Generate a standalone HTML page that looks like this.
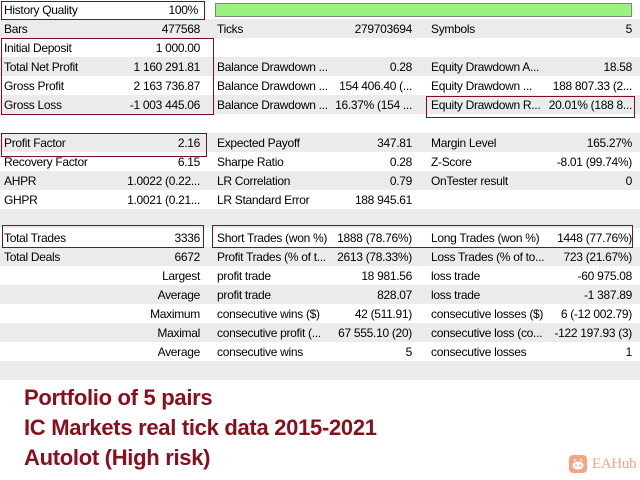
<!DOCTYPE html>
<html><head><meta charset="utf-8"><style>
*{margin:0;padding:0;box-sizing:border-box}
body{width:640px;height:480px;background:#fff;position:relative;overflow:hidden;font-family:"Liberation Sans",sans-serif;font-size:12px;color:#000;letter-spacing:-0.3px}
.r{position:absolute;left:0;width:640px;height:19px}
.g{background:#ebebeb}
.c{position:absolute;top:3px;white-space:nowrap;line-height:15px}
.l1{left:4px}.v1{right:440px}.l2{left:217px}.v2{right:228px}.l3{left:431px}.v3{right:8px}
.b{position:absolute;border:1px solid #7a1020}
.t{position:absolute;left:24px;font-weight:bold;font-size:22px;color:#8a0f1c;letter-spacing:-0.3px;white-space:nowrap}
</style></head><body>
<div class="r" style="top:0"><span class="c l1">History Quality</span><span class="c v1" style="right:442px">100%</span></div>
<div style="position:absolute;left:215px;top:3px;width:417px;height:14px;background:#98f47e;border:1px solid #7a8a7a"></div>
<div class="r g" style="top:19px"><span class="c l1">Bars</span><span class="c v1">477568</span><span class="c l2">Ticks</span><span class="c v2">279703694</span><span class="c l3">Symbols</span><span class="c v3">5</span></div>
<div class="r" style="top:38px"><span class="c l1">Initial Deposit</span><span class="c v1">1 000.00</span></div>
<div class="r g" style="top:57px"><span class="c l1">Total Net Profit</span><span class="c v1">1 160 291.81</span><span class="c l2">Balance Drawdown ...</span><span class="c v2">0.28</span><span class="c l3">Equity Drawdown A...</span><span class="c v3">18.58</span></div>
<div class="r" style="top:76px"><span class="c l1">Gross Profit</span><span class="c v1">2 163 736.87</span><span class="c l2">Balance Drawdown ...</span><span class="c v2">154 406.40 (...</span><span class="c l3">Equity Drawdown ...</span><span class="c v3">188 807.33 (2...</span></div>
<div class="r g" style="top:95px"><span class="c l1">Gross Loss</span><span class="c v1">-1 003 445.06</span><span class="c l2">Balance Drawdown ...</span><span class="c v2">16.37% (154 ...</span><span class="c l3">Equity Drawdown R...</span><span class="c v3">20.01% (188 8...</span></div>
<div class="r g" style="top:133px"><span class="c l1">Profit Factor</span><span class="c v1">2.16</span><span class="c l2">Expected Payoff</span><span class="c v2">347.81</span><span class="c l3">Margin Level</span><span class="c v3">165.27%</span></div>
<div class="r" style="top:152px"><span class="c l1">Recovery Factor</span><span class="c v1">6.15</span><span class="c l2">Sharpe Ratio</span><span class="c v2">0.28</span><span class="c l3">Z-Score</span><span class="c v3">-8.01 (99.74%)</span></div>
<div class="r g" style="top:171px"><span class="c l1">AHPR</span><span class="c v1">1.0022 (0.22...</span><span class="c l2">LR Correlation</span><span class="c v2">0.79</span><span class="c l3">OnTester result</span><span class="c v3">0</span></div>
<div class="r" style="top:190px"><span class="c l1">GHPR</span><span class="c v1">1.0021 (0.21...</span><span class="c l2">LR Standard Error</span><span class="c v2">188 945.61</span></div>
<div class="r g" style="top:209px"></div>
<div class="r" style="top:228px"><span class="c l1">Total Trades</span><span class="c v1">3336</span><span class="c l2">Short Trades (won %)</span><span class="c v2">1888 (78.76%)</span><span class="c l3">Long Trades (won %)</span><span class="c v3">1448 (77.76%)</span></div>
<div class="r g" style="top:247px"><span class="c l1">Total Deals</span><span class="c v1">6672</span><span class="c l2">Profit Trades (% of t...</span><span class="c v2">2613 (78.33%)</span><span class="c l3">Loss Trades (% of to...</span><span class="c v3">723 (21.67%)</span></div>
<div class="r" style="top:266px"><span class="c v1">Largest</span><span class="c l2">profit trade</span><span class="c v2">18 981.56</span><span class="c l3">loss trade</span><span class="c v3">-60 975.08</span></div>
<div class="r g" style="top:285px"><span class="c v1">Average</span><span class="c l2">profit trade</span><span class="c v2">828.07</span><span class="c l3">loss trade</span><span class="c v3">-1 387.89</span></div>
<div class="r" style="top:304px"><span class="c v1">Maximum</span><span class="c l2">consecutive wins ($)</span><span class="c v2">42 (511.91)</span><span class="c l3">consecutive losses ($)</span><span class="c v3">6 (-12 002.79)</span></div>
<div class="r g" style="top:323px"><span class="c v1">Maximal</span><span class="c l2">consecutive profit (...</span><span class="c v2">67 555.10 (20)</span><span class="c l3">consecutive loss (co...</span><span class="c v3">-122 197.93 (3)</span></div>
<div class="r" style="top:342px"><span class="c v1">Average</span><span class="c l2">consecutive wins</span><span class="c v2">5</span><span class="c l3">consecutive losses</span><span class="c v3">1</span></div>
<div class="r g" style="top:361px"></div>
<div class="b" style="left:1px;top:1px;width:204px;height:19px"></div>
<div class="b" style="left:1px;top:38px;width:213px;height:77px"></div>
<div class="b" style="left:426px;top:96px;width:209px;height:22px"></div>
<div class="b" style="left:1px;top:133px;width:206px;height:24px"></div>
<div class="b" style="left:2px;top:225px;width:202px;height:23px"></div>
<div class="b" style="left:212px;top:225px;width:421px;height:23px"></div>
<div class="t" style="top:385px">Portfolio of 5 pairs</div>
<div class="t" style="top:415px">IC Markets real tick data 2015-2021</div>
<div class="t" style="top:445px">Autolot (High risk)</div>
<svg style="position:absolute;left:569px;top:455px" width="18" height="18" viewBox="0 0 18 18"><rect width="18" height="18" rx="4" fill="#f9a283"/><ellipse cx="9" cy="10.5" rx="5.5" ry="4" fill="#fff"/><circle cx="7" cy="10.5" r="1" fill="#f9a283"/><circle cx="11" cy="10.5" r="1" fill="#f9a283"/><path d="M5 6 L6.5 4 M13 6 L11.5 4" stroke="#fff" stroke-width="1.5"/></svg>
<div style="position:absolute;left:592px;top:456px;font-family:'Liberation Serif',serif;font-size:15px;color:#f9a283">EAHub</div>
</body></html>
